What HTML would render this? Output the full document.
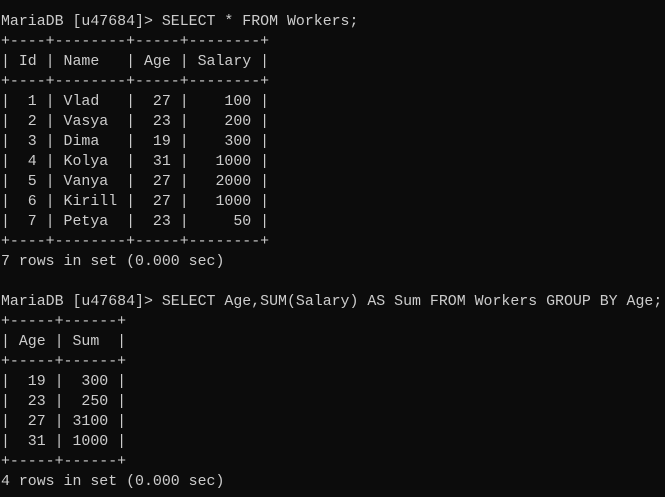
<!DOCTYPE html>
<html><head><meta charset="utf-8"><style>
html,body{margin:0;padding:0;background:#0c0c0c;}
body{width:665px;height:497px;overflow:hidden;}
pre{margin:0;padding:12px 0 0 1px;font-family:"Liberation Mono",monospace;font-size:14.9px;line-height:20px;color:#cccccc;white-space:pre;}
</style></head><body><pre>MariaDB [u47684]> SELECT * FROM Workers;
+----+--------+-----+--------+
| Id | Name   | Age | Salary |
+----+--------+-----+--------+
|  1 | Vlad   |  27 |    100 |
|  2 | Vasya  |  23 |    200 |
|  3 | Dima   |  19 |    300 |
|  4 | Kolya  |  31 |   1000 |
|  5 | Vanya  |  27 |   2000 |
|  6 | Kirill |  27 |   1000 |
|  7 | Petya  |  23 |     50 |
+----+--------+-----+--------+
7 rows in set (0.000 sec)

MariaDB [u47684]> SELECT Age,SUM(Salary) AS Sum FROM Workers GROUP BY Age;
+-----+------+
| Age | Sum  |
+-----+------+
|  19 |  300 |
|  23 |  250 |
|  27 | 3100 |
|  31 | 1000 |
+-----+------+
4 rows in set (0.000 sec)</pre></body></html>
